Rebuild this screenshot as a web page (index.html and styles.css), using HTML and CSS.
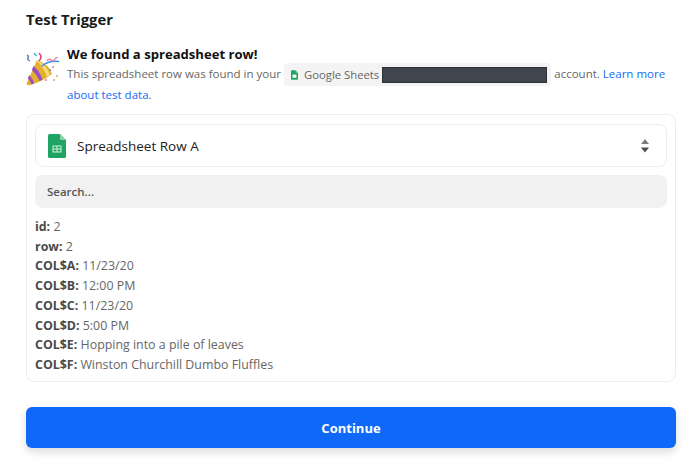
FILE: index.html
```html
<!DOCTYPE html>
<html lang="en">
<head>
<meta charset="utf-8">
<title>Test Trigger</title>
<link rel="stylesheet" href="styles.css">
</head>
<body>
<main class="page">
  <h1 class="title">Test Trigger</h1>
  <section class="notice">
    <svg class="party" viewBox="0 0 34 34" aria-hidden="true">
      <path d="M11 8 L0.800 31 Q0.200 33.800 3 33.200 Q16 30 26 22 Q23 12 11 8Z" fill="#e3b02f"/>
      <path d="M10 9 Q17 13 21 25 L24 23 Q21 13 11 8Z" fill="#f6dc7a"/>
      <path d="M7.500 14 Q13 18 16.500 27.500 L13.500 29 Q10.500 22 5.800 18Z" fill="#9a4fc4"/>
      <path d="M3.200 23 Q6.500 26 8.200 31.500 L5.500 32.500 Q4.500 28.500 1.800 26.500Z" fill="#9a4fc4"/>
      <path d="M16 14 Q23 8 33 9.500" fill="none" stroke="#3f8ee8" stroke-width="1.600"/>
      <path d="M13 9 Q17 5 13 1" fill="none" stroke="#e0446a" stroke-width="1.600"/>
      <path d="M21 9 q2 -3 4 -1 q2 2 4 -1 q1 -2 3 -1" fill="none" stroke="#e77b9b" stroke-width="1.300"/>
      <path d="M1 3 q2 1 1 3 q-1 2 2 3" fill="none" stroke="#3b6fd6" stroke-width="1.300"/>
      <path d="M8 1 q1 2 3 3" fill="none" stroke="#3fa8d8" stroke-width="1.200"/>
      <circle cx="27" cy="15" r="1" fill="#e77b9b"/>
      <circle cx="24" cy="18" r="1" fill="#4a90e2"/>
      <circle cx="31" cy="24" r="1" fill="#e8a16a"/>
      <circle cx="28" cy="28" r="1" fill="#e8a16a"/>
      <circle cx="20" cy="28" r="1" fill="#e77b9b"/>
    </svg>
    <div class="notice-body">
      <h2 class="notice-title">We found a spreadsheet row!</h2>
      <p class="notice-text">This spreadsheet row was found in your
        <span class="chip">
          <svg class="chip-icon" viewBox="0 0 18 24" aria-hidden="true">
            <path d="M2 0H12L18 6V22Q18 24 16 24H2Q0 24 0 22V2Q0 0 2 0Z" fill="#1fa463"/>
            <path d="M12 0L18 6H13.500Q12 6 12 4.500Z" fill="#8ed1b1"/>
            <path d="M4 11H14V19H4Z" fill="#fff"/>
          </svg>
          <span class="chip-label">Google Sheets</span>
          <span class="redact"></span>
        </span>
        account. <a class="link" href="#">Learn more about test data</a>.</p>
    </div>
  </section>
  <section class="card">
    <div class="select">
      <svg class="sheet-icon" viewBox="0 0 18 24" aria-hidden="true">
        <path d="M1.500 0H12L18 6V22.500Q18 24 16.500 24H1.500Q0 24 0 22.500V1.500Q0 0 1.500 0Z" fill="#1fa463"/>
        <path d="M12 0L18 6H13.500Q12 6 12 4.500Z" fill="#8ed1b1"/>
        <path d="M4.500 11.500H13.500V18.500H4.500ZM5.500 12.500V14.500H8.500V12.500ZM9.500 12.500V14.500H12.500V12.500ZM5.500 15.500V17.500H8.500V15.500ZM9.500 15.500V17.500H12.500V15.500Z" fill="#d5efe1" fill-rule="evenodd"/>
      </svg>
      <span class="select-label">Spreadsheet Row A</span>
      <svg class="updown" viewBox="0 0 8 14" aria-hidden="true">
        <path d="M4 0L8 5H0Z" fill="#7a7d85"/>
        <path d="M0 8.500H8L4 13.500Z" fill="#4a4d55"/>
      </svg>
    </div>
    <div class="search">Search...</div>
    <dl class="fields">
      <div class="field"><dt>id:</dt> <dd>2</dd></div>
      <div class="field"><dt>row:</dt> <dd>2</dd></div>
      <div class="field"><dt>COL$A:</dt> <dd>11/23/20</dd></div>
      <div class="field"><dt>COL$B:</dt> <dd>12:00 PM</dd></div>
      <div class="field"><dt>COL$C:</dt> <dd>11/23/20</dd></div>
      <div class="field"><dt>COL$D:</dt> <dd>5:00 PM</dd></div>
      <div class="field"><dt>COL$E:</dt> <dd>Hopping into a pile of leaves</dd></div>
      <div class="field"><dt>COL$F:</dt> <dd>Winston Churchill Dumbo Fluffles</dd></div>
    </dl>
  </section>
  <button class="continue" type="button">Continue</button>
</main>
</body>
</html>
```
FILE: styles.css
```css
* { box-sizing: border-box; }
html, body { margin: 0; background: #fff; }
body { font-family: "Open Sans", "Noto Sans", sans-serif; width: 700px; height: 476px; overflow: hidden; }
.page { display: flex; flex-direction: column; padding: 10px 24px 0 26px; }
.title { margin: 0; font-size: 14.8px; line-height: 19px; font-weight: 700; color: #1a1a1a; }
.notice { display: flex; gap: 7px; margin-top: 16px; }
.party { width: 34px; height: 34px; flex: none; margin-top: 7px; }
.notice-body { flex: 1; min-width: 0; }
.notice-title { margin: 0; font-size: 13.1px; line-height: 19px; font-weight: 700; color: #111; }
.notice-text { margin: 0; font-size: 11.5px; line-height: 20.5px; color: #666; }
.chip { display: inline-flex; align-items: center; height: 23px; margin: -2px 0; padding: 0 4px 0 7px; border-radius: 4px; background: #f4f4f4; vertical-align: middle; }
.chip-icon { width: 7px; height: 10px; margin-right: 6px; }
.chip-label { margin-right: 3px; font-size: 11.3px; }
.redact { width: 165px; height: 16px; background: #40454f; border: 1px solid #2c3038; }
.link { color: #136bf5; text-decoration: none; }
.card { display: flex; flex-direction: column; gap: 8px; margin-top: 9px; height: 268px; padding: 9px 8px 0; border: 1px solid #ececec; border-radius: 8px; }
.select { display: flex; align-items: center; height: 43px; flex: none; padding: 0 17px 0 12px; border: 1px solid #ececec; border-radius: 8px; }
.sheet-icon { width: 18px; height: 24px; flex: none; }
.select-label { flex: 1; margin-left: 11px; font-size: 13.5px; color: #222; }
.updown { width: 8px; height: 14px; }
.search { display: flex; align-items: center; height: 33px; flex: none; padding-left: 12px; border-radius: 8px; background: #f1f1f1; font-size: 11.5px; font-weight: 600; color: #555; }
.fields { margin: 1px 0 0; }
.field { font-size: 12.4px; line-height: 19.7px; color: #666; }
.field dt, .field dd { display: inline; margin: 0; }
.field dt { font-weight: 700; color: #4a4a4a; }
.continue { height: 41px; margin-top: 25px; border: 0; border-radius: 6px; background: #1068f8; color: #fff; font: 700 13px "Open Sans", sans-serif; box-shadow: 0 4px 8px rgba(0,0,0,.14); }
```
